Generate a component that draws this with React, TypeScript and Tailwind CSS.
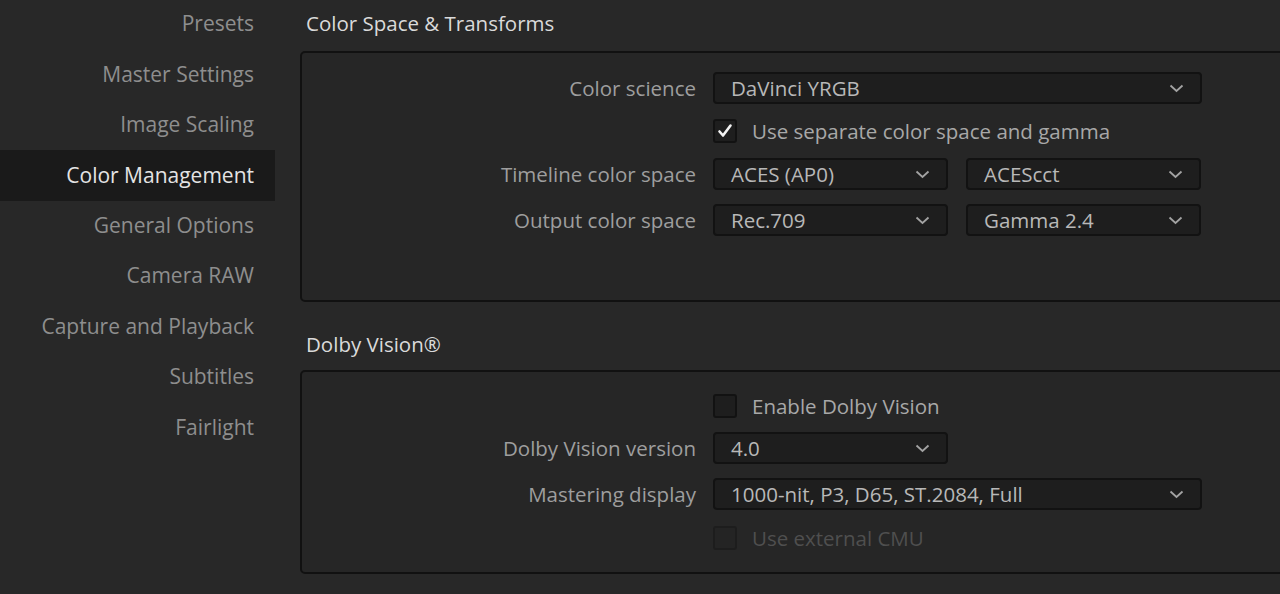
import React from "react";

const navItems = [
  "Presets",
  "Master Settings",
  "Image Scaling",
  "Color Management",
  "General Options",
  "Camera RAW",
  "Capture and Playback",
  "Subtitles",
  "Fairlight",
];

const Chevron = () => (
  <svg width="15" height="9" viewBox="0 0 15 9" className="shrink-0">
    <path d="M1.5 1.5 L7.5 7 L13.5 1.5" fill="none" stroke="#a3a3a3" strokeWidth="1.8" />
  </svg>
);

const Select = ({ value, wide }: { value: string; wide?: boolean }) => (
  <div
    className={`flex h-[32px] items-center justify-between rounded-[4px] border-2 border-[#121212] bg-[#1e1e1e] pl-[16px] pr-[16px] text-[#b8b8b8] ${
      wide ? "w-[489px]" : "w-[235px]"
    }`}
  >
    <span>{value}</span>
    <Chevron />
  </div>
);

const Checkbox = ({ checked, disabled, label }: { checked?: boolean; disabled?: boolean; label: string }) => (
  <div className="flex h-[24px] items-center gap-[15px]">
    <div
      className={`flex h-[24px] w-[24px] items-center justify-center rounded-[3px] border-2 ${
        disabled ? "border-[#1d1d1d] bg-[#242424]" : "border-[#121212] bg-[#1e1e1e]"
      }`}
    >
      {checked && (
        <svg width="16" height="16" viewBox="0 0 16 16">
          <path d="M2.5 8.5 L6 12.5 L13.5 2.5" fill="none" stroke="#f2f2f2" strokeWidth="2.6" strokeLinecap="round" strokeLinejoin="round" />
        </svg>
      )}
    </div>
    <span className={disabled ? "text-[#4f4f4f]" : "text-[#a8a8a8]"}>{label}</span>
  </div>
);

const Row = ({ label, children, className = "" }: { label?: string; children: React.ReactNode; className?: string }) => (
  <div className={`flex items-center ${className}`}>
    <div className="w-[411px] shrink-0 pr-[17px] text-right text-[#9e9e9e]">{label}</div>
    <div className="flex gap-[18px]">{children}</div>
  </div>
);

export default function App() {
  return (
    <div
      className="flex h-[594px] w-[1280px] overflow-hidden bg-[#282828] text-[20.5px]"
      style={{ fontFamily: '"Open Sans", "Noto Sans", sans-serif' }}
    >
      <nav className="mt-[-1px] w-[275px] shrink-0 text-[21px]">
        {navItems.map((item) => (
          <div
            key={item}
            className={`flex h-[50.4px] items-center justify-end pr-[21px] ${
              item === "Color Management" ? "bg-[#1a1a1a] text-[#e4e4e4]" : "text-[#8e8e8e]"
            }`}
          >
            {item}
          </div>
        ))}
      </nav>

      <main className="ml-[25px] w-[1000px] shrink-0">
        <h2 className="flex h-[51px] items-center pb-[4px] pl-[6px] text-[#dadada]">Color Space &amp; Transforms</h2>
        <section className="h-[251px] w-[1000px] rounded-[5px] border-2 border-[#111111] bg-[#262626] pt-[19px]">
          <div className="flex flex-col gap-[15px]">
            <Row label="Color science">
              <Select value="DaVinci YRGB" wide />
            </Row>
            <Row>
              <Checkbox checked label="Use separate color space and gamma" />
            </Row>
            <Row label="Timeline color space">
              <Select value="ACES (AP0)" />
              <Select value="ACEScct" />
            </Row>
            <Row label="Output color space" className="mt-[-1px]">
              <Select value="Rec.709" />
              <Select value="Gamma 2.4" />
            </Row>
          </div>
        </section>

        <h2 className="flex h-[68px] items-center pt-[16px] pl-[6px] text-[#dadada]">Dolby Vision®</h2>
        <section className="h-[204px] w-[1000px] rounded-[5px] border-2 border-[#111111] bg-[#262626] pt-[22px]">
          <div className="flex flex-col gap-[14px]">
            <Row>
              <Checkbox label="Enable Dolby Vision" />
            </Row>
            <Row label="Dolby Vision version">
              <Select value="4.0" />
            </Row>
            <Row label="Mastering display">
              <Select value="1000-nit, P3, D65, ST.2084, Full" wide />
            </Row>
            <Row className="mt-[2px]">
              <Checkbox disabled label="Use external CMU" />
            </Row>
          </div>
        </section>
      </main>
    </div>
  );
}
